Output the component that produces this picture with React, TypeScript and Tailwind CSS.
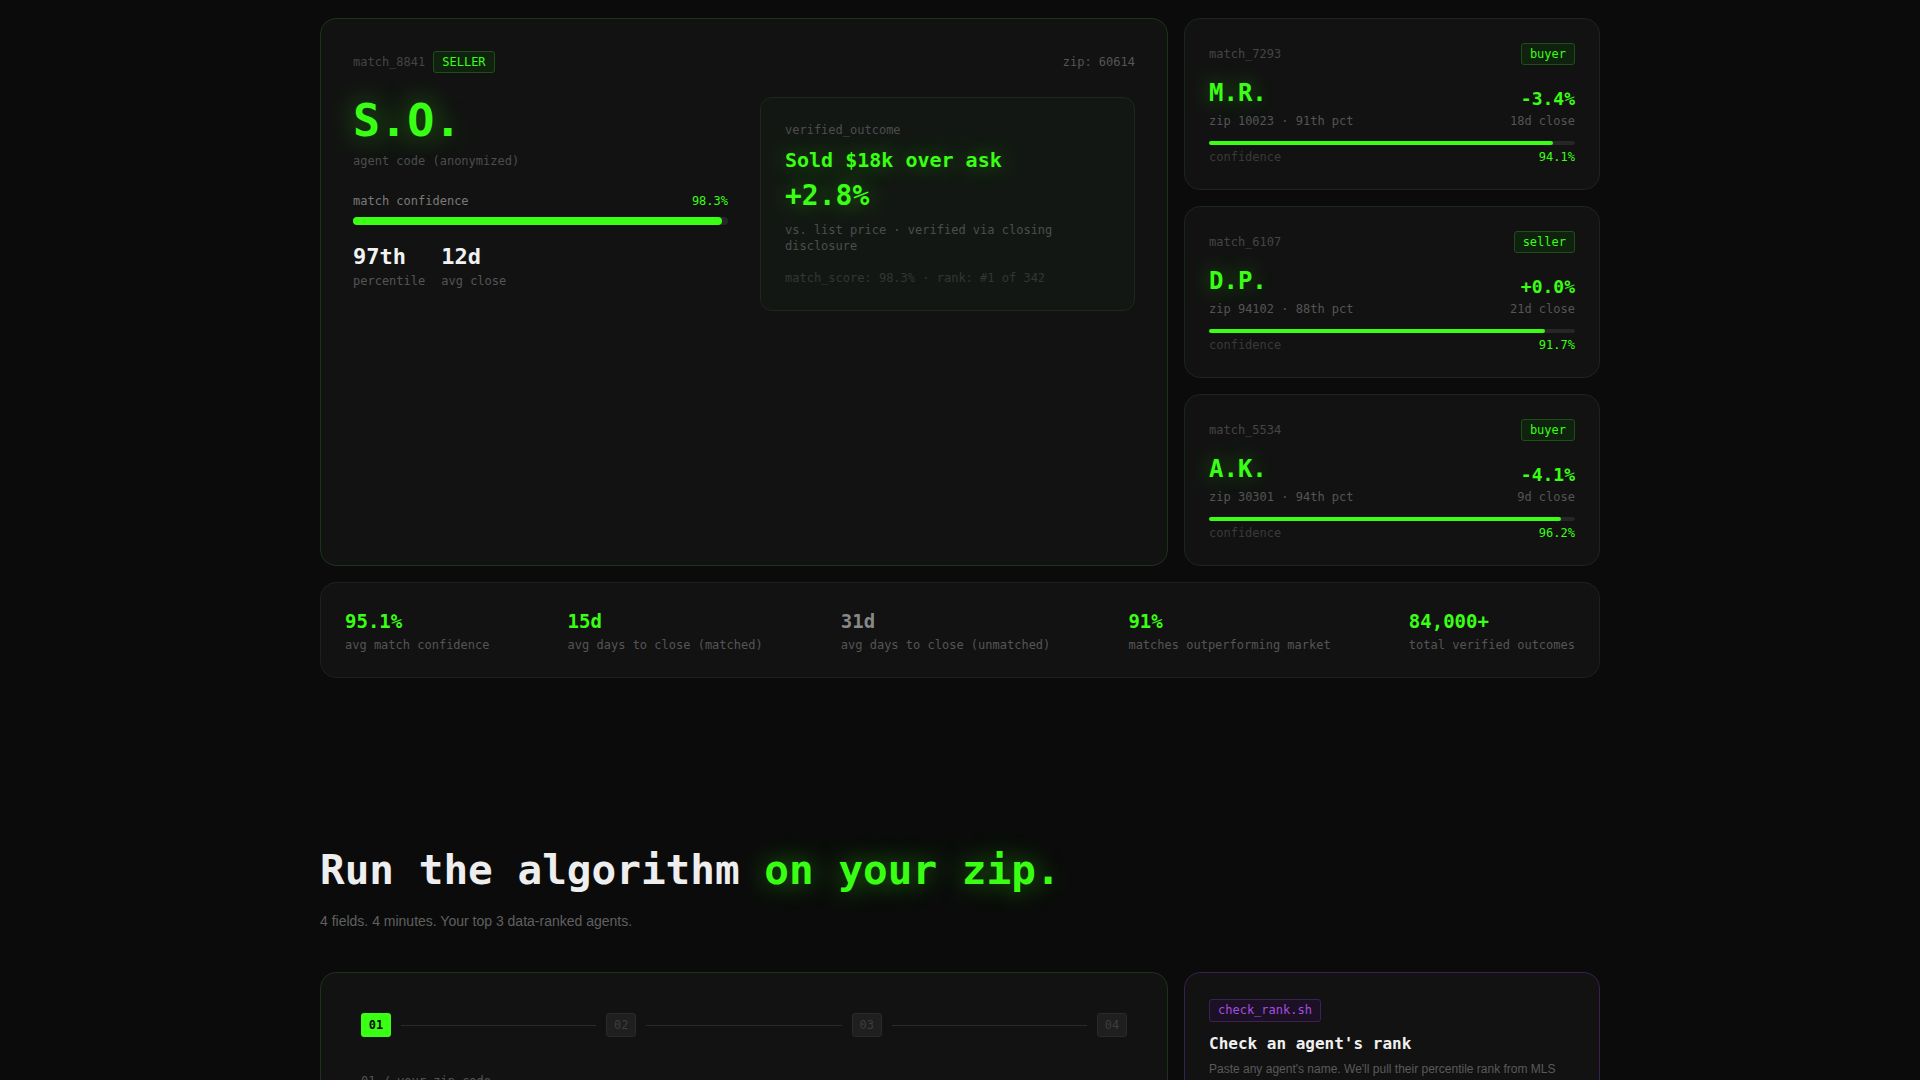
import React from "react";

const mono = "font-['DejaVu_Sans_Mono',monospace]";
const sans = "font-['Liberation_Sans',Arial,sans-serif]";
const glow = "[text-shadow:0_0_22px_rgba(57,255,20,0.45)]";

interface MatchCardProps {
    id: string;
    role: string;
    initials: string;
    delta: string;
    zip: string;
    pct: string;
    close: string;
    confidence: number;
}

const matches: MatchCardProps[] = [
    { id: "match_7293", role: "buyer", initials: "M.R.", delta: "-3.4%", zip: "10023", pct: "91th", close: "18d", confidence: 94.1 },
    { id: "match_6107", role: "seller", initials: "D.P.", delta: "+0.0%", zip: "94102", pct: "88th", close: "21d", confidence: 91.7 },
    { id: "match_5534", role: "buyer", initials: "A.K.", delta: "-4.1%", zip: "30301", pct: "94th", close: "9d", confidence: 96.2 },
];

const stats = [
    { value: "95.1%", label: "avg match confidence", dim: false },
    { value: "15d", label: "avg days to close (matched)", dim: false },
    { value: "31d", label: "avg days to close (unmatched)", dim: true },
    { value: "91%", label: "matches outperforming market", dim: false },
    { value: "84,000+", label: "total verified outcomes", dim: false },
];

const Badge: React.FC<{ children: React.ReactNode }> = ({ children }) => (
    <span className="inline-flex h-[22px] items-center rounded-[3px] border border-[#1f4d1a] bg-[#0f220d] px-2 text-xs text-[#39ff14]">
        {children}
    </span>
);

const MatchCard: React.FC<MatchCardProps> = ({ id, role, initials, delta, zip, pct, close, confidence }) => (
    <div className="rounded-2xl border border-[#1a261a] bg-[#121212] p-6">
        <div className="flex items-center justify-between">
            <span className="text-xs text-[#454545]">{id}</span>
            <Badge>{role}</Badge>
        </div>
        <div className="mt-3 flex items-end justify-between">
            <div>
                <div className={`text-2xl font-bold text-[#39ff14] ${glow}`}>{initials}</div>
                <div className="mt-1 text-xs text-[#555]">
                    zip {zip} · {pct} pct
                </div>
            </div>
            <div className="text-right">
                <div className="text-lg font-bold text-[#39ff14]">{delta}</div>
                <div className="text-xs text-[#555]">{close} close</div>
            </div>
        </div>
        <div className="mt-3 h-1 rounded-full bg-[#262626]">
            <div className="h-1 rounded-full bg-[#39ff14]" style={{ width: `${confidence}%` }} />
        </div>
        <div className="mt-1 flex justify-between text-xs">
            <span className="text-[#3a3a3a]">confidence</span>
            <span className="text-[#39ff14]">{confidence}%</span>
        </div>
    </div>
);

const Step: React.FC<{ n: string; active?: boolean }> = ({ n, active }) => (
    <span
        className={
            active
                ? "flex h-6 w-[30px] items-center justify-center rounded-[3px] bg-[#39ff14] text-xs font-bold text-[#0a0a0a]"
                : "flex h-6 w-[30px] items-center justify-center rounded-[3px] border border-[#2a2a2a] bg-[#1f1f1f] text-xs text-[#3d3d3d]"
        }
    >
        {n}
    </span>
);

export default function App() {
    return (
        <div className={`min-h-screen bg-[#0b0b0b] ${mono}`}>
            <div className="mx-auto max-w-[1280px] pt-[18px]">
                {/* featured match + list */}
                <div className="grid grid-cols-[1fr_416px] gap-4">
                    <div className="rounded-2xl border border-[#1d331b] bg-[#121212] p-8">
                        <div className="flex items-center justify-between">
                            <div className="flex items-center gap-2">
                                <span className="text-xs text-[#454545]">match_8841</span>
                                <Badge>SELLER</Badge>
                            </div>
                            <span className="text-xs text-[#555]">zip: 60614</span>
                        </div>

                        <div className="mt-6 grid grid-cols-2 items-start gap-8">
                            <div>
                                <div className="text-[45px] font-bold leading-[48px] text-[#39ff14] [text-shadow:0_0_28px_rgba(57,255,20,0.5)]">S.O.</div>
                                <div className="mt-2 text-xs text-[#4d4d4d]">agent code (anonymized)</div>

                                <div className="mt-6 flex justify-between text-xs">
                                    <span className="text-[#7a7a7a]">match confidence</span>
                                    <span className="text-[#39ff14]">98.3%</span>
                                </div>
                                <div className="mt-2 h-2 rounded-full bg-[#262626]">
                                    <div className="h-2 rounded-full bg-[#39ff14]" style={{ width: "98.3%" }} />
                                </div>

                                <div className="mt-4 flex gap-4">
                                    <div>
                                        <div className="text-[22px] font-bold leading-8 text-[#f2f2f2]">97th</div>
                                        <div className="text-xs text-[#555]">percentile</div>
                                    </div>
                                    <div>
                                        <div className="text-[22px] font-bold leading-8 text-[#f2f2f2]">12d</div>
                                        <div className="text-xs text-[#555]">avg close</div>
                                    </div>
                                </div>
                            </div>

                            <div className="rounded-xl border border-[#1b2a1b] bg-[#131713] p-6">
                                <div className="text-xs text-[#4d4d4d]">verified_outcome</div>
                                <div className={`mt-2 text-xl font-bold text-[#39ff14] ${glow}`}>Sold $18k over ask</div>
                                <div className={`mt-1 text-[28px] font-bold leading-9 text-[#39ff14] ${glow}`}>+2.8%</div>
                                <div className="mt-2 text-xs text-[#4d4d4d]">
                                    vs. list price · verified via closing disclosure
                                </div>
                                <div className="mt-4 text-xs text-[#353535]">match_score: 98.3% · rank: #1 of 342</div>
                            </div>
                        </div>
                    </div>

                    <div className="flex flex-col gap-4">
                        {matches.map((m) => (
                            <MatchCard key={m.id} {...m} />
                        ))}
                    </div>
                </div>

                {/* stats strip */}
                <div className="mt-4 flex justify-between rounded-2xl border border-[#1f1f1f] bg-[#121212] p-6">
                    {stats.map((s) => (
                        <div key={s.label}>
                            <div
                                className={
                                    s.dim
                                        ? "text-[19px] font-bold leading-7 text-[#888]"
                                        : "text-[19px] font-bold leading-7 text-[#39ff14]"
                                }
                            >
                                {s.value}
                            </div>
                            <div className="mt-0.5 text-xs text-[#555]">{s.label}</div>
                        </div>
                    ))}
                </div>

                {/* run the algorithm */}
                <h2 className="mt-[170px] text-[41px] font-bold leading-[1.1] text-[#eeeeee]">
                    Run the algorithm <span className="text-[#39ff14] [text-shadow:0_0_26px_rgba(57,255,20,0.5)]">on your zip.</span>
                </h2>
                <p className={`mt-[18px] text-sm text-[#606060] ${sans}`}>4 fields. 4 minutes. Your top 3 data-ranked agents.</p>

                <div className="mt-[41px] grid grid-cols-[1fr_416px] gap-4">
                    <div className="rounded-2xl border border-[#1d331b] bg-[#121212] p-10">
                        <div className="flex items-center gap-2.5">
                            <Step n="01" active />
                            <span className="h-px flex-1 bg-[#2a2a2a]" />
                            <Step n="02" />
                            <span className="h-px flex-1 bg-[#2a2a2a]" />
                            <Step n="03" />
                            <span className="h-px flex-1 bg-[#2a2a2a]" />
                            <Step n="04" />
                        </div>
                        <div className="mt-9 text-xs text-[#555]">01 / your zip code</div>
                        <div className="mt-3 h-12 rounded-lg border border-[#262626] bg-[#0e0e0e]" />
                    </div>

                    <div className="rounded-2xl border border-[#36204d] bg-[#121212] p-6">
                        <span className="mt-px inline-flex h-[23px] items-center rounded-[3px] border border-[#3a2352] bg-[#1b1024] px-2 text-xs text-[#a64fe0]">
                            check_rank.sh
                        </span>
                        <div className="mt-2.5 text-base font-bold text-[#f0f0f0]">Check an agent's rank</div>
                        <p className={`mt-1 text-xs leading-relaxed text-[#5a5a5a] ${sans}`}>
                            Paste any agent's name. We'll pull their percentile rank from MLS closing data in
                            their zip.
                        </p>
                    </div>
                </div>
                <div className="h-40" />
            </div>
        </div>
    );
}
